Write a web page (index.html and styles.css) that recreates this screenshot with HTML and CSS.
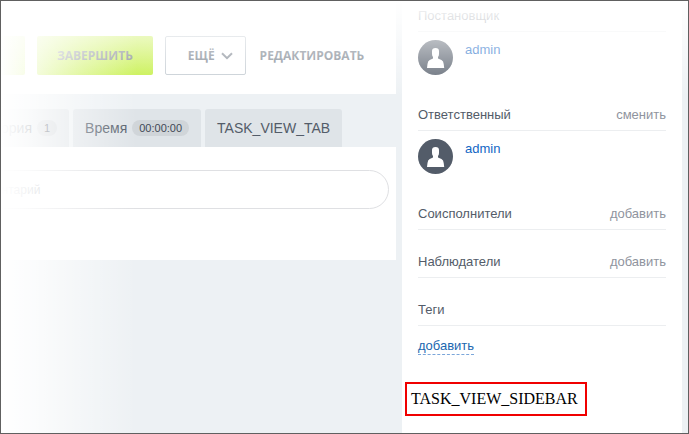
FILE: index.html
```
<!DOCTYPE html>
<html lang="ru">
<head>
<meta charset="utf-8">
<title>Задача</title>
<link rel="stylesheet" href="styles.css">
</head>
<body>
<div class="frame">
  <main class="main">
    <div class="toolbar">
      <button class="btn btn-green btn-start" type="button" aria-label="Начать"></button>
      <button class="btn btn-green" type="button">ЗАВЕРШИТЬ</button>
      <button class="btn btn-outline" type="button">ЕЩЁ
        <svg class="chevron" viewBox="0 0 12 8" aria-hidden="true"><path d="M1 1.200 6 6.200 11 1.200"/></svg>
      </button>
      <button class="btn btn-link" type="button">РЕДАКТИРОВАТЬ</button>
    </div>
    <nav class="tabs">
      <a class="tab tab-first" href="#history">ория <span class="badge">1</span></a>
      <a class="tab" href="#time">Время <span class="badge">00:00:00</span></a>
      <a class="tab" href="#custom">TASK_VIEW_TAB</a>
    </nav>
    <div class="comments">
      <input class="comment-input" type="text" placeholder="Добавить комментарий" aria-label="Добавить комментарий">
    </div>
  </main>
  <aside class="sidebar">
    <section class="block">
      <div class="block-head"><span>Постановщик</span></div>
      <div class="person">
        <svg class="avatar" viewBox="0 0 35 35" aria-hidden="true"><circle cx="17.500" cy="17.500" r="17.500"/><path d="M14 11Q14 8 17.500 8T21 11V14Q21 16 20 17V18.500L23.500 20Q25.500 21 25.700 24L26.200 28H9L9.500 24Q9.700 21 11.700 20L15 18.500V17Q14 16 14 14Z"/></svg>
        <a href="#admin">admin</a>
      </div>
    </section>
    <section class="block">
      <div class="block-head"><span>Ответственный</span><button class="action" type="button">сменить</button></div>
      <div class="person">
        <svg class="avatar" viewBox="0 0 35 35" aria-hidden="true"><circle cx="17.500" cy="17.500" r="17.500"/><path d="M14 11Q14 8 17.500 8T21 11V14Q21 16 20 17V18.500L23.500 20Q25.500 21 25.700 24L26.200 28H9L9.500 24Q9.700 21 11.700 20L15 18.500V17Q14 16 14 14Z"/></svg>
        <a href="#admin">admin</a>
      </div>
    </section>
    <section class="block">
      <div class="block-head"><span>Соисполнители</span><button class="action" type="button">добавить</button></div>
    </section>
    <section class="block">
      <div class="block-head"><span>Наблюдатели</span><button class="action" type="button">добавить</button></div>
    </section>
    <section class="block">
      <div class="block-head"><span>Теги</span></div>
      <div class="tags"><a class="add-tag" href="#tags">добавить</a></div>
    </section>
    <div class="placement">TASK_VIEW_SIDEBAR</div>
  </aside>
</div>
</body>
</html>
```
FILE: styles.css
```
* { box-sizing: border-box; }

body {
  margin: 0;
  font: 13px/18px "Liberation Sans", Arial, sans-serif;
  color: #535c69;
}

button { font: inherit; cursor: pointer; }
a { text-decoration: none; }

.frame {
  position: relative;
  display: flex;
  gap: 6px;
  min-height: 100vh;
  padding-right: 6px;
  border: 1px solid #606060;
  background: #edf1f4;
  overflow: hidden;
}

/* Soft fades along the left and top edges */
.frame::before,
.frame::after {
  content: "";
  position: absolute;
  pointer-events: none;
}

.frame::before {
  inset: 0 auto 0 0;
  width: 136px;
  background: linear-gradient(to right, #fff, rgba(255, 255, 255, 0.84) 20%, rgba(255, 255, 255, 0.4) 60%, transparent);
}

.frame::after {
  inset: 0 0 auto 0;
  height: 96px;
  background: linear-gradient(to bottom, #fff, rgba(255, 255, 255, 0.8) 20%, rgba(255, 255, 255, 0.2) 80%, transparent);
}

.main {
  flex: 1;
  min-width: 0;
  overflow: hidden;
}

.toolbar {
  display: flex;
  gap: 12px;
  padding: 35px 0 19px;
  background: #fff;
}

.btn {
  flex: none;
  height: 39px;
  padding: 0 20px;
  border: 0;
  border-radius: 2px;
  font: 700 12px/39px "Open Sans", sans-serif;
  color: #717a86;
}

.btn-green { background: linear-gradient(to bottom, #c9f050, #bfee33); color: #6b737e; }
.btn-start { width: 80px; margin-left: -56px; }

.btn-outline {
  display: flex;
  align-items: center;
  gap: 6px;
  padding: 0 12px 0 22px;
  border: 1px solid #c0c8cf;
  background: #fff;
}

.btn-link { padding: 0 2px; background: none; }

.chevron {
  width: 12px;
  height: 8px;
  fill: none;
  stroke: #7b838e;
  stroke-width: 2;
}

.tabs {
  display: flex;
  gap: 4px;
  padding-top: 15px;
}

.tab {
  flex: none;
  display: flex;
  align-items: center;
  gap: 5px;
  height: 38px;
  padding: 0 12px;
  border-radius: 3px 3px 0 0;
  background: #dfe4e8;
  font: 14px/18px "Liberation Sans", Arial, sans-serif;
  color: #535c69;
}

.tab-first { padding-left: 0; }

.badge {
  padding: 0 7px;
  border-radius: 8px;
  background: #d0d5d9;
  font-size: 11px;
  line-height: 16px;
  color: #424956;
}

.comments {
  display: flex;
  height: 113px;
  padding: 23px 7px 0 0;
  background: #fff;
}

.comment-input {
  flex: 1;
  height: 39px;
  margin-left: -114px;
  padding: 0 22px;
  border: 1px solid #dfe0e3;
  border-radius: 20px;
  font: 12px "Liberation Sans", Arial, sans-serif;
}

.comment-input::placeholder { color: #a8adb4; }

.sidebar {
  flex: 0 0 280px;
  padding: 6px 16px 0;
  background: #fff;
}

.block { margin-bottom: 23px; }

.block-head {
  display: flex;
  justify-content: space-between;
  padding-bottom: 6px;
  border-bottom: 1px solid #eceef0;
}

.action {
  padding: 0;
  border: 0;
  background: none;
  color: #8f949e;
}

.person {
  display: flex;
  gap: 12px;
  padding: 8px 0;
  line-height: 20px;
}

.person a { color: #1266c4; }

.avatar { width: 35px; height: 35px; }
.avatar circle { fill: #535c69; }
.avatar path { fill: #fff; }

.tags { padding-top: 11px; }

.add-tag {
  display: inline-block;
  line-height: 16px;
  border-bottom: 1px dashed #7ba6da;
  color: #2067b0;
}

.placement {
  width: max-content;
  margin: 27px 0 0 -13px;
  padding: 6px 7px 6px 4px;
  border: 2px solid #f00000;
  font: 16px/18px "Liberation Serif", "Times New Roman", serif;
  color: #000;
}
```
